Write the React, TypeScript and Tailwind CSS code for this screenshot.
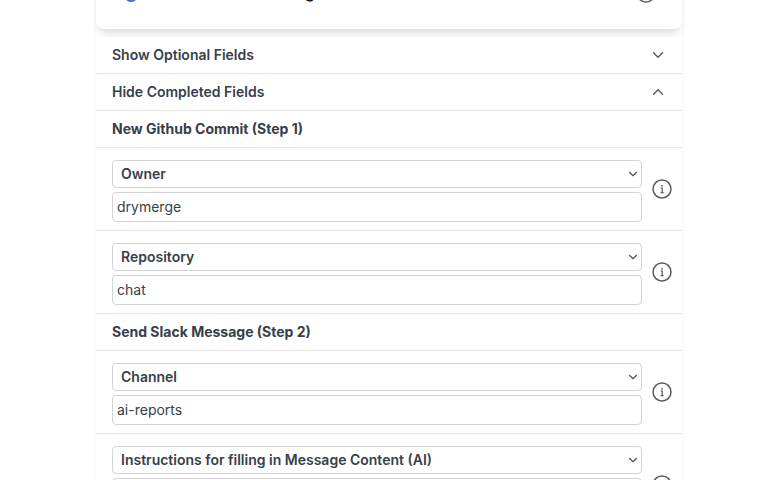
import React, { useState } from 'react';
import { ChevronDown, ChevronUp } from 'lucide-react';

interface Field {
  id: string;
  label: string;
  value: string;
  multiline?: boolean;
}

interface Step {
  title: string;
  fields: Field[];
}

const steps: Step[] = [
  {
    title: 'New Github Commit (Step 1)',
    fields: [
      { id: 'owner', label: 'Owner', value: 'drymerge' },
      { id: 'repository', label: 'Repository', value: 'chat' },
    ],
  },
  {
    title: 'Send Slack Message (Step 2)',
    fields: [
      { id: 'channel', label: 'Channel', value: 'ai-reports' },
      {
        id: 'instructions',
        label: 'Instructions for filling in Message Content (AI)',
        value: '',
        multiline: true,
      },
    ],
  },
];

const InfoIcon: React.FC = () => (
  <svg width="20" height="20" viewBox="0 0 20 20" fill="none" stroke="#5b5d61">
    <circle cx="10" cy="10" r="9" strokeWidth="1.5" />
    <circle cx="10" cy="6.8" r="0.9" fill="#5b5d61" stroke="none" />
    <path d="M8.8 9.2H10.2V13.5M8.6 13.7H11.6" strokeWidth="1.2" />
  </svg>
);

const FieldRow: React.FC<{ field: Field }> = ({ field }) => {
  const [value, setValue] = useState(field.value);

  return (
    <div className="flex items-center gap-2.5 border-b border-[#e6e6e6] pr-2.5 pl-4">
      <div className="flex min-w-0 flex-1 flex-col gap-1 pt-3 pb-2">
        <div className="grid items-center">
          <select
            aria-label={`${field.label} field`}
            className="col-start-1 row-start-1 h-7 w-full appearance-none rounded border border-[#d4d4d6] bg-white pr-6 pl-2 text-sm font-semibold"
          >
            <option>{field.label}</option>
          </select>
          <ChevronDown
            size={14}
            className="pointer-events-none col-start-1 row-start-1 mr-0.5 justify-self-end text-gray-600"
          />
        </div>
        {field.multiline ? (
          <textarea
            id={field.id}
            aria-label={field.label}
            value={value}
            onChange={(e) => setValue(e.target.value)}
            className="h-[50px] w-full resize-none rounded border border-[#d4d4d6] bg-white px-1 text-sm"
          />
        ) : (
          <input
            id={field.id}
            aria-label={field.label}
            value={value}
            onChange={(e) => setValue(e.target.value)}
            className="h-[30px] w-full rounded border border-[#d4d4d6] bg-white px-1 pb-0.5 text-sm"
          />
        )}
      </div>
      <button type="button" aria-label={`About ${field.label}`} className="shrink-0">
        <InfoIcon />
      </button>
    </div>
  );
};

interface ToggleRowProps {
  label: string;
  open: boolean;
  onToggle: () => void;
}

const ToggleRow: React.FC<ToggleRowProps> = ({ label, open, onToggle }) => {
  const Chevron = open ? ChevronUp : ChevronDown;

  return (
    <button
      type="button"
      onClick={onToggle}
      className="flex h-[37px] w-full items-center justify-between border-b border-[#e6e6e6] px-4 font-semibold"
    >
      {label}
      <Chevron size={18} strokeWidth={1.75} className="-mr-px text-gray-600" />
    </button>
  );
};

export default function App() {
  const [showOptional, setShowOptional] = useState(false);
  const [showCompleted, setShowCompleted] = useState(true);

  return (
    <div className="h-screen overflow-hidden bg-white font-['Inter',sans-serif] text-sm text-[#374049]">
      <main className="mr-[86px] ml-24 bg-white shadow-[0_0_6px_rgba(0,0,0,0.05)]">
        {/* Card header, scrolled mostly out of view */}
        <header className="-mt-8 flex h-[61px] items-start rounded-b-lg bg-white pt-4 pr-[26px] pl-7 shadow-[0_10px_8px_-4px_rgba(0,0,0,0.1),0_0_4px_rgba(0,0,0,0.06)]">
          <span className="mt-1 size-3.5 shrink-0 rounded-full bg-[#4f63d2]" />
          <h1 className="ml-2 flex-1 text-base leading-4 font-semibold text-gray-900">
            Send Commit Message
          </h1>
          <button type="button" aria-label="About this workflow" className="-mt-px">
            <InfoIcon />
          </button>
        </header>

        <div className="relative mt-2 bg-white">
          <ToggleRow
            label="Show Optional Fields"
            open={showOptional}
            onToggle={() => setShowOptional(!showOptional)}
          />
          <ToggleRow
            label="Hide Completed Fields"
            open={showCompleted}
            onToggle={() => setShowCompleted(!showCompleted)}
          />

          {showCompleted &&
            steps.map((step) => (
              <section key={step.title}>
                <h2 className="flex h-[37px] items-center border-b border-[#e6e6e6] px-4 font-bold">
                  {step.title}
                </h2>
                {step.fields.map((field) => (
                  <FieldRow key={field.id} field={field} />
                ))}
              </section>
            ))}
        </div>
      </main>
    </div>
  );
}
